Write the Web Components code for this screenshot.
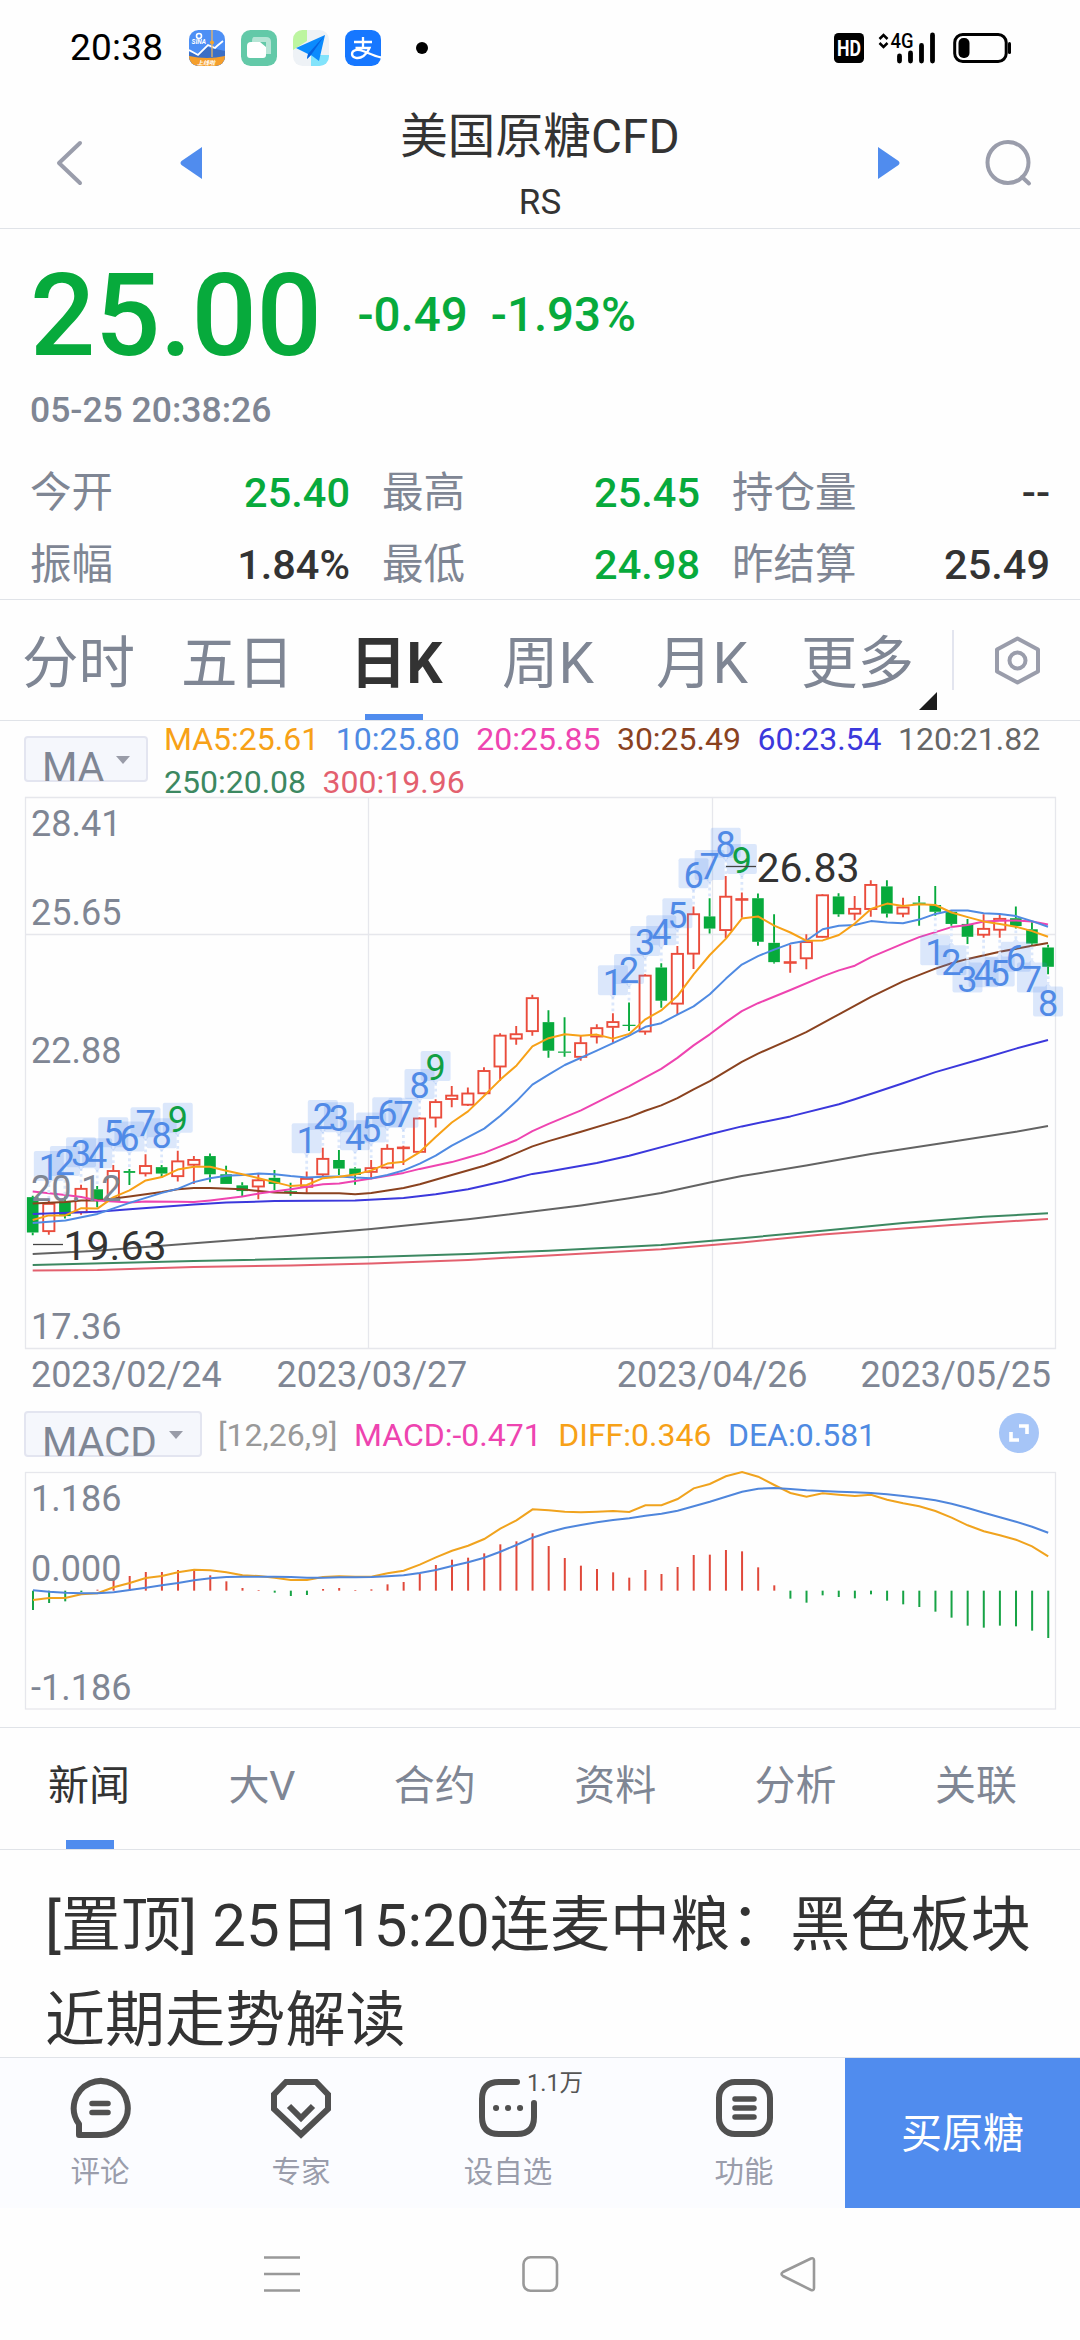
<!DOCTYPE html>
<html lang="zh-CN">
<head>
<meta charset="utf-8">
<title>美国原糖CFD</title>
<style>
    html, body {
        margin: 0;
        padding: 0;
        background: #fefefe;
    }
    body {
        width: 1080px;
        height: 2340px;
        overflow: hidden;
        font-family: Roboto, "Noto Sans CJK SC", sans-serif;
        color: #333;
        --green: #07aa3c;
        --red: #ea4c3c;
        --blue: #508cee;
        --grey: #7f8694;
        --line: #e0e3e8;
    }
</style>
</head>
<body>
<quote-page></quote-page>

<script>
const SVG_NS = 'http://www.w3.org/2000/svg';

// creates an svg node and appends it to its parent
function draw(parent, tag, attrs, text) {
    const node = document.createElementNS(SVG_NS, tag);
    for (const key in attrs) node.setAttribute(key, attrs[key]);
    if (text !== undefined) node.textContent = text;
    parent.appendChild(node);
    return node;
}

// simple elements that only need markup
function define(name, html, setup) {
    customElements.define(name, class extends HTMLElement {
        constructor() {
            super();
            const template = document.createElement('template');
            template.innerHTML = html;
            this.attachShadow({ mode: 'open' }).appendChild(template.content.cloneNode(true));
        }
        connectedCallback() {
            if (setup) setup(this.shadowRoot, this);
        }
    });
}

define('status-bar', `
    <style>
        :host { display: flex; height: 90px; box-sizing: border-box; padding: 24px 69px 18px 70px; align-items: center; color: #000; }
        .time { font-size: 37px; line-height: 40px; width: 119px; letter-spacing: 0.2px; }
        .apps { display: flex; gap: 16px; }
        .dot { width: 12px; height: 12px; border-radius: 50%; background: #000; margin-left: 35px; }
        .signals { margin-left: auto; display: flex; }
        svg { display: block; }
    </style>
    <div class="time">20:38</div>
    <div class="apps">
        <svg width="36" height="36" viewBox="0 0 36 36">
            <defs><clipPath id="c"><rect width="36" height="36" rx="9.500"/></clipPath></defs>
            <g clip-path="url(#c)">
                <rect width="36" height="36" fill="#4d8ff5"/>
                <path d="M0 22l9 3 9-9 5 3 4 0 9 2v16H0z" fill="#3b6fc6"/>
                <path d="M0 20l9 5 10-10 7 3 2-2 6-5" fill="none" stroke="#fff" stroke-width="1.800"/>
                <path d="M23 0v27" stroke="#e9b565" stroke-width="1.300"/>
                <circle cx="23" cy="12.500" r="2" fill="#f5a52b"/>
                <circle cx="10" cy="6" r="2.500" fill="none" stroke="#fff" stroke-width="1.600"/>
                <text x="2.500" y="13.500" font-size="6.500" font-weight="bold" font-style="italic" fill="#fff">SINA</text>
                <path d="M0 26q18 4 36 0v10H0z" fill="#f59f2c"/>
                <text x="8" y="34.500" font-size="6" font-weight="bold" font-style="italic" fill="#fff">上线啦</text>
            </g>
        </svg>
        <svg width="36" height="36" viewBox="0 0 36 36">
            <rect width="36" height="36" rx="9.500" fill="#63c9a8"/>
            <path d="M13 7h12q5 0 5 5v12h-5V12H11q0-5 2-5z" fill="#b5e5d5"/>
            <path d="M10 12h9l6 5v8q0 3-3 3H9q-3 0-3-3v-9q0-4 4-4z" fill="#fff"/>
        </svg>
        <svg width="36" height="36" viewBox="0 0 36 36">
            <defs><clipPath id="m"><rect width="36" height="36" rx="9.500"/></clipPath></defs>
            <g clip-path="url(#m)">
                <rect width="36" height="36" fill="#eef2f6"/>
                <path d="M0 0h14v11L0 20z" fill="#bdf5a0"/>
                <path d="M18 25h18v11H18z" fill="#82e3fb"/>
            </g>
            <path d="M32 5L3 18l12 6-1 5 4-4 8 6z" fill="#0b8bfd"/>
            <path d="M32 5L15 24l-1 5 4-4z" fill="#0762e0"/>
        </svg>
        <svg width="36" height="36" viewBox="0 0 36 36">
            <rect width="36" height="36" rx="9.500" fill="#1677ff"/>
            <path d="M9 12h18M18 7v11M10.500 18h14q-2 5-6 8c-5 3.500-11.500 2-11.500-2 0-4.500 6-5 11-3 5 1.800 11 5 18 6.500" fill="none" stroke="#fff" stroke-width="2.300"/>
        </svg>
    </div>
    <div class="dot"></div>
    <div class="signals">
        <svg width="178" height="36" viewBox="0 -3 178 36">
            <rect x="1" width="30" height="30" rx="4.500" fill="#000"/>
            <text x="4" y="23" font-size="22" font-weight="700" fill="#fff" textLength="24" lengthAdjust="spacingAndGlyphs">HD</text>
            <path d="M46.500 6l4-4 4 4M46.500 10l4 4 4-4" fill="none" stroke="#000" stroke-width="2.500"/>
            <text x="57.500" y="14.500" font-size="20" font-weight="500" fill="#000" textLength="23" lengthAdjust="spacingAndGlyphs">4G</text>
            <path d="M66.500 23v5M77.500 20v8M88.500 12.500v15.500M99.500 2v26" stroke="#000" stroke-width="4.800" stroke-linecap="round"/>
            <rect x="121.700" y="1.500" width="51.500" height="27" rx="8" fill="none" stroke="#000" stroke-width="3"/>
            <rect x="125.500" y="5" width="11" height="20" rx="5" fill="#000"/>
            <path d="M176.500 10.500v9" stroke="#000" stroke-width="3" stroke-linecap="round"/>
        </svg>
    </div>
`);

define('title-bar', `
    <style>
        :host { display: grid; grid-template-columns: 240px 1fr 240px; height: 139px; box-sizing: border-box; border-bottom: 1px solid var(--line); }
        svg { display: block; }
        .mid { text-align: center; }
        .name { font-size: 47.500px; line-height: 56px; padding-top: 19px; letter-spacing: 0.2px; }
        .code { font-size: 35px; line-height: 42px; padding-top: 17px; }
    </style>
    <svg width="240" height="137" viewBox="0 90 240 137">
        <path d="M80 143L59 163l21 20" fill="none" stroke="#9a9dab" stroke-width="4" stroke-linecap="round" stroke-linejoin="round"/>
        <path d="M202 147v32l-20.500-14q-2-2 0-4z" fill="var(--blue)"/>
    </svg>
    <div class="mid">
        <div class="name"><slot></slot></div>
        <div class="code"><slot name="code"></slot></div>
    </div>
    <svg width="240" height="137" viewBox="840 90 240 137">
        <path d="M878 147v32l20.500-14q2-2 0-4z" fill="var(--blue)"/>
        <circle cx="1008" cy="162.500" r="20.500" fill="none" stroke="#9a9dab" stroke-width="4"/>
        <path d="M1022 177l7 6.500" stroke="#9a9dab" stroke-width="4" stroke-linecap="round"/>
    </svg>
`);

define('quote-cell', `
    <style>
        :host { display: flex; justify-content: space-between; line-height: 72px; font-size: 41.500px; }
        .label { color: var(--grey); }
        .value { font-weight: 500; color: var(--value, #333); }
        :host([down]) { --value: var(--green); }
    </style>
    <span class="label"><slot name="label"></slot></span>
    <span class="value"><slot></slot></span>
`);

define('quote-panel', `
    <style>
        :host { display: block; height: 371px; box-sizing: border-box; padding: 23px 30px 0 30px; border-bottom: 1px solid var(--line); }
        .price { display: flex; align-items: center; color: var(--green); font-weight: 500; height: 128px; }
        .last { font-size: 115px; line-height: 128px; letter-spacing: -0.4px; }
        .diff, .pct { font-size: 47.500px; margin-bottom: 2px; }
        .diff { margin-left: 36px; }
        .pct { margin-left: 23px; }
        .time { font-size: 35.500px; line-height: 42px; color: var(--grey); font-weight: 500; padding-top: 9px; }
        .grid { display: grid; grid-template-columns: 320px 318px 318px; column-gap: 32px; padding-top: 26px; }
    </style>
    <div class="price"><span class="last">25.00</span><span class="diff">-0.49</span><span class="pct">-1.93%</span></div>
    <div class="time">05-25 20:38:26</div>
    <div class="grid">
        <quote-cell down><span slot="label">今开</span>25.40</quote-cell>
        <quote-cell down><span slot="label">最高</span>25.45</quote-cell>
        <quote-cell><span slot="label">持仓量</span>--</quote-cell>
        <quote-cell><span slot="label">振幅</span>1.84%</quote-cell>
        <quote-cell down><span slot="label">最低</span>24.98</quote-cell>
        <quote-cell><span slot="label">昨结算</span>25.49</quote-cell>
    </div>
`);

define('period-tabs', `
    <style>
        :host { display: grid; grid-template-columns: 159px 169px 152px 154px 145px 111px 168px; height: 121px; box-sizing: border-box; border-bottom: 1px solid var(--line); font-size: 56.500px; line-height: 129px; color: var(--grey); padding-left: 22px; }
        .tab { position: relative; height: 120px; white-space: nowrap; }
        .on { color: #333; font-weight: 700; }
        .on::after { content: ""; position: absolute; left: 15px; bottom: 0; width: 58px; height: 6px; background: var(--blue); }
        svg { display: block; }
    </style>
    <div class="tab">分时</div>
    <div class="tab">五日</div>
    <div class="tab on">日K</div>
    <div class="tab">周K</div>
    <div class="tab">月K</div>
    <div class="tab">更多</div>
    <svg width="168" height="119" viewBox="912 600 168 119">
        <path d="M937 692v18h-18z" fill="#1c1c1c"/>
        <path d="M953 630v60" stroke="#e3e5ef" stroke-width="2"/>
        <path d="M1017.500 638.500L1038 649.500V671.500L1017.500 682.500L997 671.500V649.500z" fill="none" stroke="#9a9dab" stroke-width="4" stroke-linejoin="round"/>
        <circle cx="1017.500" cy="660.500" r="8" fill="none" stroke="#9a9dab" stroke-width="4"/>
    </svg>
`);

define('indicator-button', `
    <style>
        :host { display: flex; box-sizing: border-box; height: 46px; border: 2px solid #e3e5f0; border-radius: 4px; background: #f5f7fc; color: var(--grey); font-size: 40.500px; line-height: 58px; padding-left: 16px; }
        i { margin: 18px 0 0 12px; border: 7.500px solid transparent; border-top: 8px solid #999ca8; border-bottom: 0; height: 0; }
    </style>
    <slot></slot><i></i>
`);

define('ma-legend', `
    <style>
        :host { display: flex; height: 75px; }
        indicator-button { width: 124px; margin: 15px 16px 0 24px; }
        .values { display: flex; flex-wrap: wrap; flex: 1; font-size: 32px; line-height: 43px; column-gap: 16.500px; margin-top: -3px; align-content: flex-start; }
    </style>
    <indicator-button>MA</indicator-button>
    <div class="values">
        <span style="color:#f7a117">MA5:25.61</span>
        <span style="color:#4f8ae2">10:25.80</span>
        <span style="color:#ee44b0">20:25.85</span>
        <span style="color:#8a421f">30:25.49</span>
        <span style="color:#3b38dc">60:23.54</span>
        <span style="color:#666">120:21.82</span>
        <span style="color:#3c8861">250:20.08</span>
        <span style="color:#e3606e">300:19.96</span>
    </div>
`);

// [high, body top, body bottom, low, up] in plot units, see plotY
const CANDLES = [
    [1108,1112,1211,1219,0],[1122,1130,1208,1217,1],[1110,1124,1165,1172,0],[1077,1088,1155,1161,1],
    [1081,1090,1122,1140,0],[1022,1038,1122,1122,1],[1033,1039,1044,1078,0],[992,1024,1046,1054,1],
    [1022,1028,1046,1057,0],[982,1011,1054,1068,1],[997,1007,1022,1075,1],[990,997,1048,1070,0],
    [1024,1048,1075,1075,0],[1070,1079,1095,1110,0],[1046,1064,1083,1118,1],[1036,1058,1075,1092,0],
    [1072,1096,1098,1108,0],[1040,1060,1084,1100,1],[974,1004,1049,1053,1],[980,1008,1032,1050,0],
    [1028,1032,1050,1077,0],[1008,1030,1042,1062,1],[964,976,1030,1033,1],[968,973,975,1022,1],
    [888,891,986,988,1],[838,845,890,917,1],[801,827,838,860,1],[805,821,854,857,1],
    [748,758,822,824,1],[653,659,747,787,1],[633,655,669,685,1],[545,554,648,660,1],
    [589,622,702,722,0],[608,705,707,719,0],[660,680,720,730,1],[628,638,663,682,1],
    [597,621,636,680,1],[567,630,632,647,0],[488,491,649,657,1],[457,469,562,582,0],
    [409,430,571,600,1],[298,319,431,473,1],[275,326,360,374,0],[213,270,365,387,1],
    [259,277,280,330,1],[262,275,397,408,0],[320,400,454,458,0],[405,454,456,484,1],
    [376,397,444,474,1],[264,266,384,386,1],[261,270,320,327,0],[269,304,319,337,1],
    [225,237,306,327,1],[225,242,318,329,0],[274,300,319,328,1],[269,287,291,352,0],
    [241,294,313,324,0],[308,313,347,352,0],[333,347,383,403,0],[320,360,378,386,1],
    [322,332,364,386,1],[298,331,353,360,0],[342,362,402,405,0],[405,413,467,488,0]
];

const MA_LINES = [
    ['#e3606e', '95,1317 283,1316 563,1308 844,1303 1078,1298 1359,1288 1593,1275 1920,1258 2154,1239 2389,1217 2622,1200 2763,1190 3043,1173'],
    ['#3c8861', '95,1302 563,1291 1078,1280 1359,1271 1593,1262 1920,1246 2154,1227 2389,1206 2622,1184 2856,1167 3043,1157'],
    ['#636363', '95,1271 283,1262 563,1241 844,1220 1078,1201 1359,1174 1593,1147 1687,1135 1827,1115 1920,1100 2061,1071 2154,1053 2341,1023 2529,991 2763,957 2950,929 3043,913'],
    ['#3b38dc', '95,1159 283,1153 376,1146 563,1133 657,1127 797,1123 1031,1121 1172,1114 1265,1104 1359,1090 1453,1070 1546,1047 1593,1040 1733,1016 1827,996 1967,960 2061,936 2154,914 2295,886 2436,852 2482,838 2622,793 2716,762 2856,723 2950,696 3043,672'],
    ['#8a421f', '95,1130 190,1126 236,1121 283,1121 376,1110 470,1098 516,1090 563,1086 610,1086 704,1090 797,1099 891,1101 985,1101 1031,1104 1078,1100 1172,1086 1219,1076 1312,1050 1406,1024 1453,1008 1546,970 1593,955 1687,929 1780,902 1827,888 1874,870 1920,855 1967,835 2014,810 2061,787 2154,733 2201,710 2295,670 2341,650 2436,600 2529,551 2622,508 2716,472 2763,457 2810,445 2903,425 2997,408 3043,400'],
    ['#ee44b0', '95,1096 190,1106 236,1112 283,1121 376,1127 423,1124 516,1125 563,1126 610,1121 704,1110 751,1102 844,1090 938,1076 985,1074 1078,1060 1172,1044 1219,1033 1312,1014 1359,1001 1406,988 1453,970 1500,952 1546,927 1593,907 1687,869 1827,801 1920,753 1967,722 2014,687 2061,656 2108,622 2154,591 2201,569 2295,532 2389,494 2436,477 2482,464 2529,440 2622,402 2669,384 2763,356 2810,350 2856,340 2903,338 2950,337 2997,340 3043,349'],
    ['#4f8ae2', '95,1184 190,1177 283,1159 376,1128 470,1100 516,1089 563,1070 610,1059 657,1052 704,1050 751,1046 797,1048 844,1053 891,1057 938,1055 985,1054 1031,1057 1078,1059 1125,1050 1172,1037 1219,1018 1265,996 1312,968 1406,920 1453,884 1500,843 1546,797 1593,769 1640,742 1733,702 1827,660 1874,635 1920,625 1967,601 2014,578 2061,544 2108,500 2154,461 2201,437 2248,419 2295,402 2341,394 2389,362 2436,352 2482,350 2529,339 2576,343 2622,345 2669,335 2716,319 2763,309 2810,309 2856,317 2903,319 2950,325 2997,339 3043,355'],
    ['#f7a117', '95,1176 142,1163 190,1163 236,1143 283,1144 330,1112 376,1093 423,1065 470,1056 516,1035 563,1027 610,1027 657,1038 704,1048 751,1059 797,1070 844,1081 891,1078 938,1059 985,1055 1031,1049 1078,1037 1125,1018 1172,1013 1219,986 1265,944 1312,903 1359,872 1406,828 1453,783 1500,743 1546,690 1593,667 1640,656 1687,660 1733,657 1780,668 1827,655 1874,614 1920,589 1967,549 2014,488 2061,434 2108,388 2154,332 2201,326 2248,352 2295,371 2341,394 2389,393 2436,378 2482,346 2529,305 2576,290 2622,297 2669,292 2716,294 2763,315 2810,328 2856,340 2903,347 2950,355 2997,367 3043,383']
];

// nine-turn counts: first candle, tops of the tags, tags below the candles or not
const TURNS = [
    [1, [983,969,944,947,888,900,860,891,848], false],
    [17, [905,840,846,897,875,832,834,753,703], false],
    [36, [463,431,353,323,275,163,140,78,123], false],
    [56, [379,407,455,440,438,397,455,522], true]
];

define('kline-chart', `
    <style>
        :host { display: block; }
        svg { display: block; }
        .dates { display: flex; justify-content: space-between; padding: 0 29px 0 31px; font-size: 36px; line-height: 50px; color: var(--grey); height: 50px; }
        .dates div { display: flex; gap: 55px; letter-spacing: -0.1px; }
        .dates div + div { gap: 53px; }
    </style>
    <svg width="1080" height="554" viewBox="0 796 1080 554"></svg>
    <div class="dates">
        <div><span>2023/02/24</span><span>2023/03/27</span></div>
        <div><span>2023/04/26</span><span>2023/05/25</span></div>
    </div>
`, root => {
    const svg = root.querySelector('svg');
    const plotX = v => v / 2.9037;
    const plotY = v => 800 + v / 2.8;
    const cx = i => 32.7 + i * 16.117;

    draw(svg, 'path', { d: 'M25.5 797.5H1055.5V1348.5H25.500zM25.5 934.500H1055.5M368.5 797.500V1348.5M712.5 797.500V1348.5', fill: 'none', stroke: '#e6e7ec', 'stroke-width': 1.3 });

    CANDLES.forEach((candle, i) => {
        const [high, top, bottom, low] = candle.slice(0, 4).map(plotY);
        const up = candle[4];
        const x = cx(i);
        const color = up ? '#ea4c3c' : '#07aa3c';
        draw(svg, 'path', { d: `M${x} ${high}V${top}M${x} ${bottom}V${low}`, stroke: color, 'stroke-width': 1.9 });
        if (bottom - top < 1.5) {
            draw(svg, 'path', { d: `M${x - 6.5} ${(top + bottom) / 2}h13`, stroke: color, 'stroke-width': up ? 2.6 : 1.2 });
        } else if (up) {
            draw(svg, 'rect', { x: x - 5.6, y: top + 0.3, width: 11.2, height: bottom - top - 0.6, fill: '#fff', stroke: color, 'stroke-width': 1.9 });
        } else {
            draw(svg, 'rect', { x: x - 5.8, y: top, width: 11.6, height: bottom - top, fill: color });
        }
    });

    for (const [color, points] of MA_LINES) {
        const scaled = points.split(' ').map(p => {
            const [x, y] = p.split(',');
            return plotX(x).toFixed(1) + ',' + plotY(y).toFixed(1);
        }).join(' ');
        draw(svg, 'polyline', { points: scaled, fill: 'none', stroke: color, 'stroke-width': 2, 'stroke-linejoin': 'round' });
    }

    for (const [start, tops, below] of TURNS) {
        tops.forEach((value, n) => {
            const x = cx(start + n);
            const top = plotY(value);
            const high = plotY(CANDLES[start + n][0]);
            const low = plotY(CANDLES[start + n][3]);
            if (below ? top > low + 5 : high > top + 34) {
                draw(svg, 'path', { d: below ? `M${x} ${low + 2}V${top - 3}` : `M${x} ${high - 2}V${top + 32}`, stroke: '#dbe7fb', 'stroke-width': 2.8, 'stroke-dasharray': '2.8 3' });
            }
            const tip = below ? `M${x - 3} ${top}l3 -3.5l3 3.5z` : `M${x - 3} ${top + 30}l3 3.5l3 -3.5z`;
            draw(svg, 'path', { d: tip, fill: '#508cee', 'fill-opacity': 0.2 });
            draw(svg, 'rect', { x: x - 15, y: top, width: 30, height: 30, rx: 2, fill: '#508cee', 'fill-opacity': 0.2 });
            draw(svg, 'text', { x, y: top + 29.3, 'font-size': 36, 'text-anchor': 'middle', fill: n === 8 ? '#109f43' : '#508ae6' }, n + 1);
        });
    }

    const labels = [['28.41', 836], ['25.65', 925], ['22.88', 1063], ['20.12', 1200.5], ['17.36', 1339]];
    for (const [value, y] of labels) {
        draw(svg, 'text', { x: 31, y, 'font-size': 36, fill: '#7f8694' }, value);
    }

    const extremes = [['19.63', 63.5, 1259.5, 1244.5, 33], ['26.83', 756.5, 882, 866.5, 726]];
    for (const [value, x, y, lineY, lineX] of extremes) {
        draw(svg, 'path', { d: `M${lineX} ${lineY}h30`, stroke: '#444', 'stroke-width': 1.3 });
        draw(svg, 'text', { x, y, 'font-size': 41, fill: '#333' }, value);
    }
});

// distances in thirds of a pixel below y = 1340
const BARS = [810,789,784,756,749,720,708,696,696,690,690,706,724,744,750,758,768,765,747,744,750,748,733,726,701,675,659,653,640,613,604,580,618,654,677,687,697,713,690,702,681,645,644,630,634,682,736,776,788,766,771,775,763,782,793,801,815,833,857,863,857,859,872,894];
const DIFF = [780,774,774,763,760,742,729,714,708,697,689,691,697,706,708,713,720,720,711,709,710,710,700,692,674,652,632,617,597,566,541,508,511,515,517,515,513,516,496,496,477,445,432,409,396,410,435,459,470,460,464,468,464,479,490,499,513,533,556,574,586,599,619,649];
const DEA = [751,755,758,760,760,757,750,743,736,729,721,715,711,710,710,710,711,713,713,712,712,711,709,706,699,690,678,667,653,635,615,593,577,564,555,547,540,535,527,521,512,499,485,470,455,446,444,447,451,453,455,457,459,463,468,474,481,491,504,518,532,545,560,578];

define('macd-chart', `
    <style>
        :host { display: block; height: 328px; box-sizing: border-box; border-bottom: 1px solid var(--line); }
        .head { display: flex; height: 70px; font-size: 32px; line-height: 70px; }
        indicator-button { width: 178px; margin: 11px 16px 0 24px; }
        .values { display: flex; gap: 16.500px; flex: 1; white-space: nowrap; }
        svg { display: block; }
        .full { margin: 13px 41px 0 0; }
    </style>
    <div class="head">
        <indicator-button>MACD</indicator-button>
        <div class="values">
            <span style="color:#999">[12,26,9]</span>
            <span style="color:#ee44b0">MACD:-0.471</span>
            <span style="color:#f7a117">DIFF:0.346</span>
            <span style="color:#4f8ae2">DEA:0.581</span>
        </div>
        <svg class="full" width="40" height="40" viewBox="0 0 40 40">
            <circle cx="20" cy="20" r="20" fill="#a6c5f7"/>
            <path d="M20 13h8v8M12 19v8h8" fill="none" stroke="#fff" stroke-width="3.600"/>
        </svg>
    </div>
    <svg class="plot" width="1080" height="256" viewBox="0 1470 1080 256"></svg>
`, root => {
    const svg = root.querySelector('.plot');
    const px = i => 33 + i * 16.115;
    const py = v => 1340 + v / 3;
    const zero = py(752);
    const line = values => values.map((v, i) => px(i).toFixed(1) + ',' + py(v).toFixed(1)).join(' ');

    draw(svg, 'rect', { x: 25.5, y: 1472.5, width: 1030, height: 236.5, fill: 'none', stroke: '#e6e7ec', 'stroke-width': 1.3 });
    BARS.forEach((v, i) => {
        draw(svg, 'path', { d: `M${px(i)} ${zero}V${py(v)}`, stroke: v < 752 ? '#e0483a' : '#17a345', 'stroke-width': 2 });
    });
    draw(svg, 'text', { x: 31, y: 1511, 'font-size': 36, fill: '#7f8694' }, '1.186');
    draw(svg, 'text', { x: 31, y: 1581, 'font-size': 36, fill: '#7f8694' }, '0.000');
    draw(svg, 'text', { x: 31, y: 1700, 'font-size': 36, fill: '#7f8694' }, '-1.186');
    draw(svg, 'polyline', { points: line(DIFF), fill: 'none', stroke: '#f0a31e', 'stroke-width': 2 });
    draw(svg, 'polyline', { points: line(DEA), fill: 'none', stroke: '#4f86dc', 'stroke-width': 2 });
});

define('news-tabs', `
    <style>
        :host { display: flex; justify-content: space-between; height: 122px; box-sizing: border-box; border-bottom: 1px solid var(--line); padding: 0 63px 0 48px; font-size: 41px; line-height: 116px; color: var(--grey); }
        div { position: relative; height: 121px; }
        .on { color: #333; }
        .on::after { content: ""; position: absolute; left: 18px; bottom: 0; width: 48px; height: 9px; background: var(--blue); }
    </style>
    <div class="on">新闻</div><div>大V</div><div>合约</div><div>资料</div><div>分析</div><div>关联</div>
`);

define('news-item', `
    <style>
        :host { display: block; height: 207px; box-sizing: border-box; padding: 28px 40px 0 45px; font-size: 60px; line-height: 95px; letter-spacing: 0.1px; overflow: hidden; }
    </style>
    <slot></slot>
`);

define('tool-item', `
    <style>
        :host { display: block; position: relative; text-align: center; font-size: 29.500px; color: #9a9dab; line-height: 40px; }
        ::slotted(svg) { display: block; margin: 18px auto 12px; }
        .badge { position: absolute; left: 125px; top: 5px; font-size: 23.500px; color: #555; }
    </style>
    <slot name="icon"></slot>
    <slot></slot>
    <span class="badge"><slot name="badge"></slot></span>
`);

define('tool-bar', `
    <style>
        :host { display: grid; grid-template-columns: 200px 202px 212px 231px 1fr; height: 151px; box-sizing: border-box; border-top: 1px solid var(--line); background: #fbfcff; }
        .last { margin-left: 29px; }
        .buy { background: var(--blue); color: #fff; font-size: 41px; line-height: 153px; height: 150px; text-align: center; }
    </style>
    <tool-item>
        <svg slot="icon" width="64" height="64" viewBox="68 2076 64 64" fill="none" stroke="#505050" stroke-width="6" stroke-linecap="round">
            <path d="M79 2135h21a27 27 0 1 0-21-11z" stroke-linejoin="round"/>
            <path d="M92 2103.500h16M92 2112.500h16" stroke-width="5.500"/>
        </svg>评论
    </tool-item>
    <tool-item>
        <svg slot="icon" width="64" height="64" viewBox="269 2076 64 64" fill="none" stroke="#505050" stroke-width="6">
            <path d="M286 2082h30l12 12.500v14.500l-27 25.500-27-25.500v-14.500z"/>
            <path d="M289 2106l12 12 12-12"/>
        </svg>专家
    </tool-item>
    <tool-item>
        <svg slot="icon" width="64" height="64" viewBox="476 2076 64 64" fill="none" stroke="#505050" stroke-width="6" stroke-linecap="round">
            <path d="M517 2082h-18q-17 0-17 17v18q0 17 17 17h18q17 0 17-17v-14"/>
            <path d="M496 2108h.1M508 2108h.1M520 2108h.1"/>
        </svg>设自选<span slot="badge">1.1万</span>
    </tool-item>
    <tool-item class="last">
        <svg slot="icon" width="64" height="64" viewBox="712 2076 64 64" fill="none" stroke="#505050" stroke-width="6" stroke-linecap="round">
            <rect x="719" y="2082" width="51" height="52" rx="16"/>
            <path d="M735 2099h19M735 2108h19M735 2117h19" stroke-width="5.500"/>
        </svg>功能
    </tool-item>
    <div class="buy">买原糖</div>
`);

define('nav-bar', `
    <style>
        :host { display: block; height: 132px; }
        svg { display: block; }
    </style>
    <svg width="1080" height="132" viewBox="0 2208 1080 132" fill="none" stroke="#999" stroke-width="2.600">
        <path d="M264 2257.500h36M264 2274h36M264 2290.500h36"/>
        <rect x="523.500" y="2257.300" width="33.500" height="33.500" rx="7"/>
        <path d="M811 2258.500L783 2272q-3 2 0 4l28 14q3 1 3-2v-27.500q0-3-3-2z"/>
    </svg>
`);

define('quote-page', `
    <style>
        :host { display: flex; flex-direction: column; height: 2340px; }
    </style>
    <status-bar></status-bar>
    <title-bar>美国原糖CFD<span slot="code">RS</span></title-bar>
    <quote-panel></quote-panel>
    <period-tabs></period-tabs>
    <ma-legend></ma-legend>
    <kline-chart></kline-chart>
    <macd-chart></macd-chart>
    <news-tabs></news-tabs>
    <news-item>[置顶] 25日15:20连麦中粮：黑色板块近期走势解读</news-item>
    <tool-bar></tool-bar>
    <nav-bar></nav-bar>
`);
</script>
</body>
</html>
